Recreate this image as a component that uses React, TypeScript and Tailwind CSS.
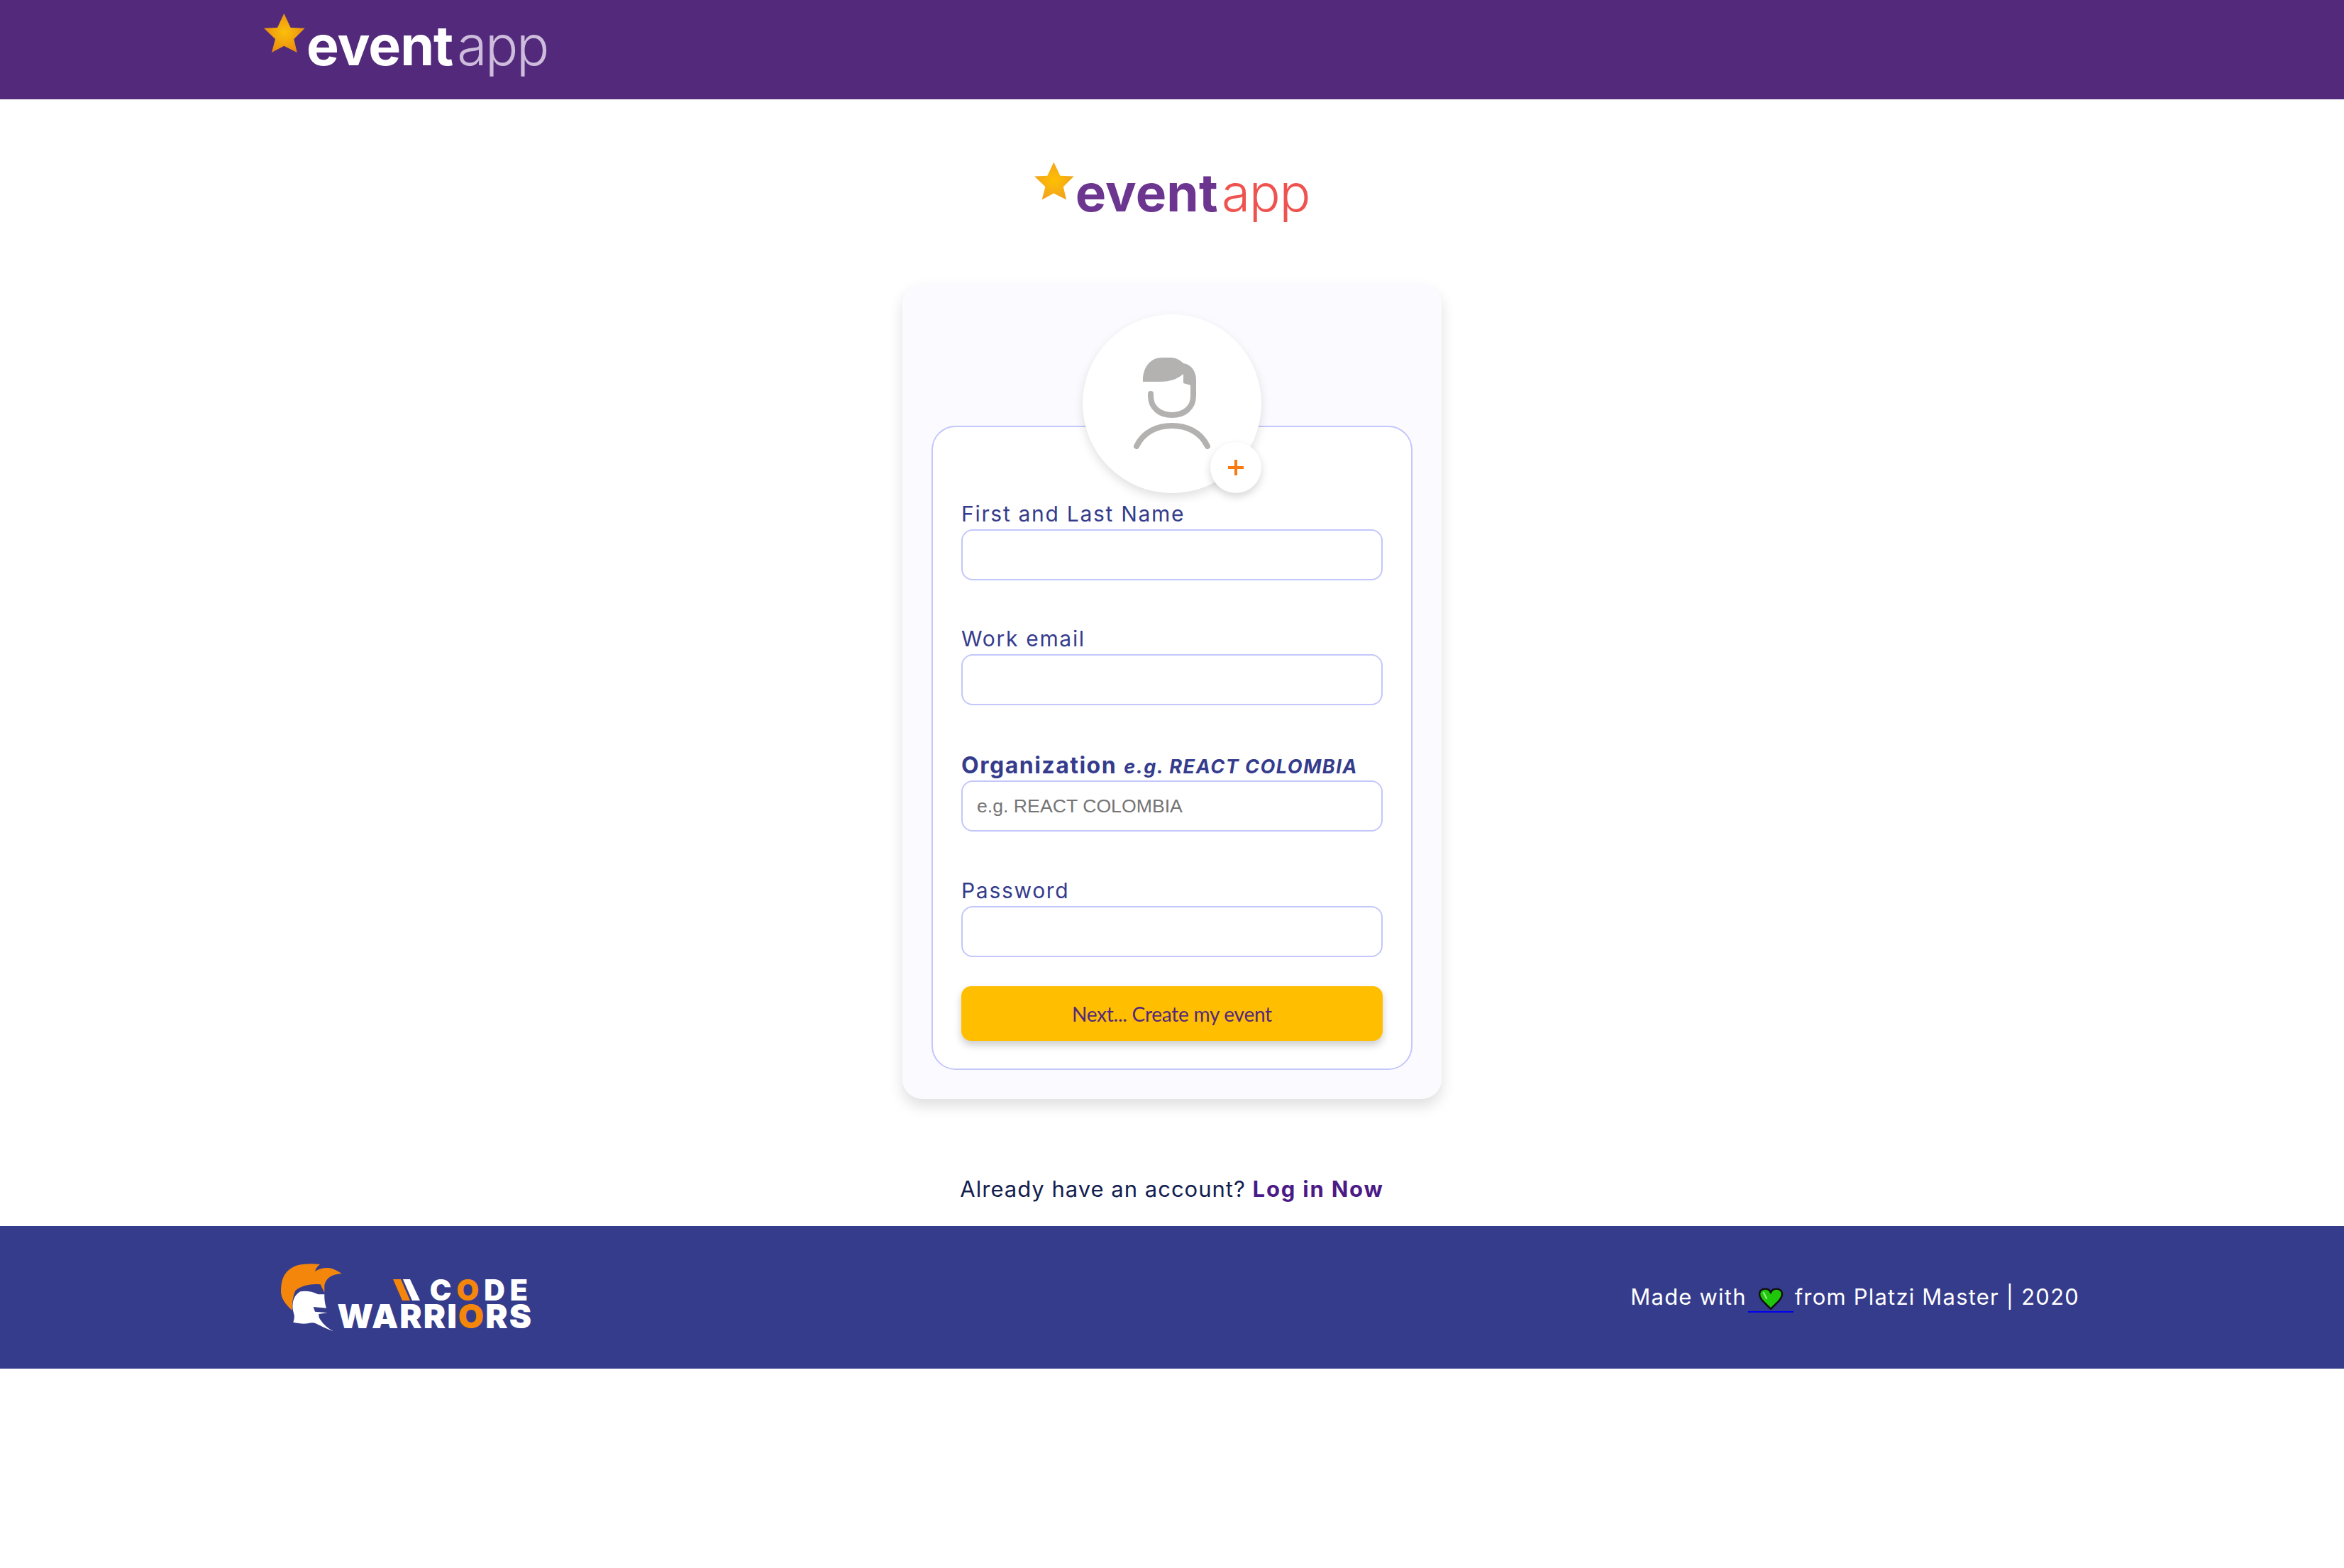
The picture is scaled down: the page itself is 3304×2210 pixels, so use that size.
import React from "react";

const STAR_POINTS = "28.3,0 37.7,20 57.7,20.7 42.3,36 46.7,55 28.3,45.7 11,55 16,36 0,20.7 19,20";

function Star({ id, inner, outer, className }: { id: string; inner: string; outer: string; className: string }) {
  return (
    <svg viewBox="0 0 58 55" className={className}>
      <defs>
        <radialGradient id={id} cx="50%" cy="48%" r="55%">
          <stop offset="0%" stopColor={inner} />
          <stop offset="100%" stopColor={outer} />
        </radialGradient>
      </defs>
      <polygon points={STAR_POINTS} fill={`url(#${id})`} />
    </svg>
  );
}

function Helmet() {
  return (
    <svg viewBox="0 0 76 96" className="h-[96px] w-[76px] shrink-0 overflow-visible">
      <path
        d="M15.700 66 C5 56 0 48 0 39.300 C0 28 2 19 7.300 12.700 C13 6 21 2 30.700 1 C39 0 47 0 55 1 C51 4 49 7 48 11 C54 7 60 5.500 67.300 6 C74 7 80 10 85.700 14.300 C80 14.500 75 15.500 70.700 17.700 C65 21 62 26 61.300 31 L61.300 41 L55.700 29.300 C48 28.500 41 29 34 31 C28 33 24 35 20.700 37.700 C17 45 15.500 55 15.700 66 Z"
        fill="#f3860b"
      />
      <path
        d="M27.300 39.300 C35 38 44 39 52.300 43.300 L61.300 43.300 C61 50 62 57 64 62.700 L45.700 61 L48 67.700 L65.700 69.300 L53.300 71 C53 74 54 77 55.700 79.300 C60 86 66 91 74 95.300 C65 92 56 88 49 84.300 C44 82 40 84 36 84.500 C30 85 23 84 17.300 82.700 C19 78 19.500 74 18 70 C16.500 65 16 60 16.700 56 C17.500 49 21 43 27.300 39.300 Z"
        fill="#ffffff"
      />
    </svg>
  );
}

function CodeWarriorsLogo() {
  return (
    <div className="flex items-start">
      <Helmet />
      <div className="mt-[19px] flex w-[279px] flex-col items-end font-['Inter',sans-serif] font-black text-white">
        <div className="flex h-[36px] items-center">
          <svg viewBox="0 0 38 30" className="mr-[14px] h-[30px] w-[38px]">
            <polygon points="0,0 11,0 24,30 13,30" fill="#f3860b" />
            <polygon points="14,0 24,0 38,30 27,30" fill="#ffffff" />
          </svg>
          <span className="text-[41px] leading-[36px] tracking-[7px]">
            C<span className="text-[#f3860b]">O</span>DE
          </span>
        </div>
        <div className="h-[37px] text-[47px] leading-[37px] tracking-[2px]">
          WARRI<span className="text-[#f3860b]">O</span>RS
        </div>
      </div>
    </div>
  );
}

function Heart() {
  return (
    <svg viewBox="0 0 36 32" className="mt-[7px] h-[32px] w-[36px]">
      <path
        d="M18 30 C12 23 2 17 2 9 C2 4 6 1.500 10 1.500 C14 1.500 17 4 18 7 C19 4 22 1.500 26 1.500 C30 1.500 34 4 34 9 C34 17 24 23 18 30 Z"
        fill="#1fc70a"
        stroke="#111111"
        strokeWidth="2.500"
        strokeLinejoin="round"
      />
      <path d="M8 7 L12 15" stroke="#8fe884" strokeWidth="2.500" strokeLinecap="round" />
    </svg>
  );
}

function Field({ label, placeholder, type = "text" }: { label: React.ReactNode; placeholder?: string; type?: string }) {
  return (
    <label className="block">
      <span className="block h-[38px] whitespace-nowrap text-[30px] leading-[33px] font-normal tracking-[1.7px] text-[#353c8c]">{label}</span>
      <input
        type={type}
        placeholder={placeholder}
        className="block h-[72px] w-full rounded-[16px] border-2 border-[#c3c7fb] bg-white px-[20px] font-['Liberation_Sans',sans-serif] text-[26.67px] text-[#333] placeholder:text-[#757575] focus:outline-none"
      />
    </label>
  );
}

export default function App() {
  return (
    <div className="w-full bg-white font-['Inter',sans-serif]">
      <header className="flex h-[140px] items-start bg-[#532a7b] pt-[19px] pl-[372px]">
        <Star id="star-top" inner="#fbc00a" outer="#ea8a10" className="h-[55px] w-[58px] shrink-0" />
        <div className="mt-[-1px] ml-[2px] flex text-[77px] leading-[92px]">
          <span className="font-bold tracking-[-1px] text-white">event</span>
          <span className="ml-[6px] font-light tracking-[-2.5px] text-[#cdbcdc]">app</span>
        </div>
      </header>

      <main className="flex flex-col items-center">
        <div className="mt-[88px] flex h-[172px] items-start">
          <Star id="star-main" inner="#ffc000" outer="#f0a122" className="h-[54px] w-[56px] shrink-0" />
          <div className="ml-[2px] flex text-[73px] leading-[88px]">
            <span className="font-bold tracking-[0.2px] text-[#6b3590]">event</span>
            <span className="ml-[5px] font-light tracking-[-1.2px] text-[#ef5350]">app</span>
          </div>
        </div>

        <section className="w-[760px] rounded-[28px] bg-[#fbfaff] px-[41px] pt-[43px] pb-[41px] shadow-[0_10px_20px_rgba(0,0,0,0.13)]">
          <div className="relative z-10 mx-auto -mb-[95px] h-[252px] w-[252px] rounded-full bg-white shadow-[0_6px_14px_rgba(0,0,0,0.12)]">
            <div className="flex h-full items-start justify-center pt-[57px]">
              <svg viewBox="0 0 125 140" className="h-[140px] w-[125px]">
                <path
                  d="M21 38 C20 20 30 4 48 4 L60 4 C68 4 74 8 78 12 C90 14 96 24 96 36 L96 45 L88 43 L78 40 L78 27 C70 34 60 38 45 38 Z"
                  fill="#b3b2b1"
                />
                <g fill="none" stroke="#b3b2b1" strokeWidth="8" strokeLinecap="round">
                  <path d="M32 55 V58 C32 75 45 85 62 85 C79 85 92 75 92 58 V38" />
                  <path d="M12 129 C22 108 42 100 62 100 S102 108 112 129" />
                </g>
              </svg>
            </div>
            <div className="absolute right-0 bottom-0 flex h-[72px] w-[72px] items-center justify-center rounded-full bg-white shadow-[0_5px_12px_rgba(0,0,0,0.16)]">
              <svg viewBox="0 0 24 24" className="h-[24px] w-[24px]">
                <path d="M12 1 V23 M1 12 H23" stroke="#f97a10" strokeWidth="4" />
              </svg>
            </div>
          </div>

          <div className="rounded-[34px] border-2 border-[#c3c7fb] bg-white px-[40px] pt-[106px] pb-[39px]">
            <Field label="First and Last Name" />
            <div className="mt-[66px]">
              <Field label="Work email" type="email" />
            </div>
            <div className="mt-[68px]">
              <Field
                label={
                  <>
                    <strong className="text-[32px] font-bold tracking-[1.5px]">Organization</strong>{" "}
                    <em className="text-[27px] font-bold tracking-[1.5px]">e.g. REACT COLOMBIA</em>
                  </>
                }
                placeholder="e.g. REACT COLOMBIA"
              />
            </div>
            <div className="mt-[67px]">
              <Field label="Password" type="password" />
            </div>
            <button
              type="button"
              className="mt-[41px] h-[77px] w-full rounded-[14px] bg-[#ffbe00] font-['Lato',sans-serif] text-[28px] tracking-[-0.25px] text-[#53277f] shadow-[0_6px_12px_rgba(0,0,0,0.2)]"
            >
              Next... Create my event
            </button>
          </div>
        </section>

        <p className="mt-[105px] mb-[31px] h-[43px] text-[31px] leading-[43px] font-normal tracking-[1px] text-[#12204f]">
          Already have an account? <a className="font-bold tracking-[1.8px] text-[#4b1a87]">Log in Now</a>
        </p>
      </main>

      <footer className="flex h-[201px] items-center justify-between bg-[#353c8c] pr-[373px] pl-[396px]">
        <CodeWarriorsLogo />
        <p className="flex items-center text-[31px] font-normal tracking-[1.2px] text-white">
          Made with
          <a className="ml-[2px] mr-[2px] flex h-[42px] w-[64px] items-start justify-center border-b-2 border-[#0000ee]">
            <Heart />
          </a>
          from Platzi Master | 2020
        </p>
      </footer>
    </div>
  );
}
